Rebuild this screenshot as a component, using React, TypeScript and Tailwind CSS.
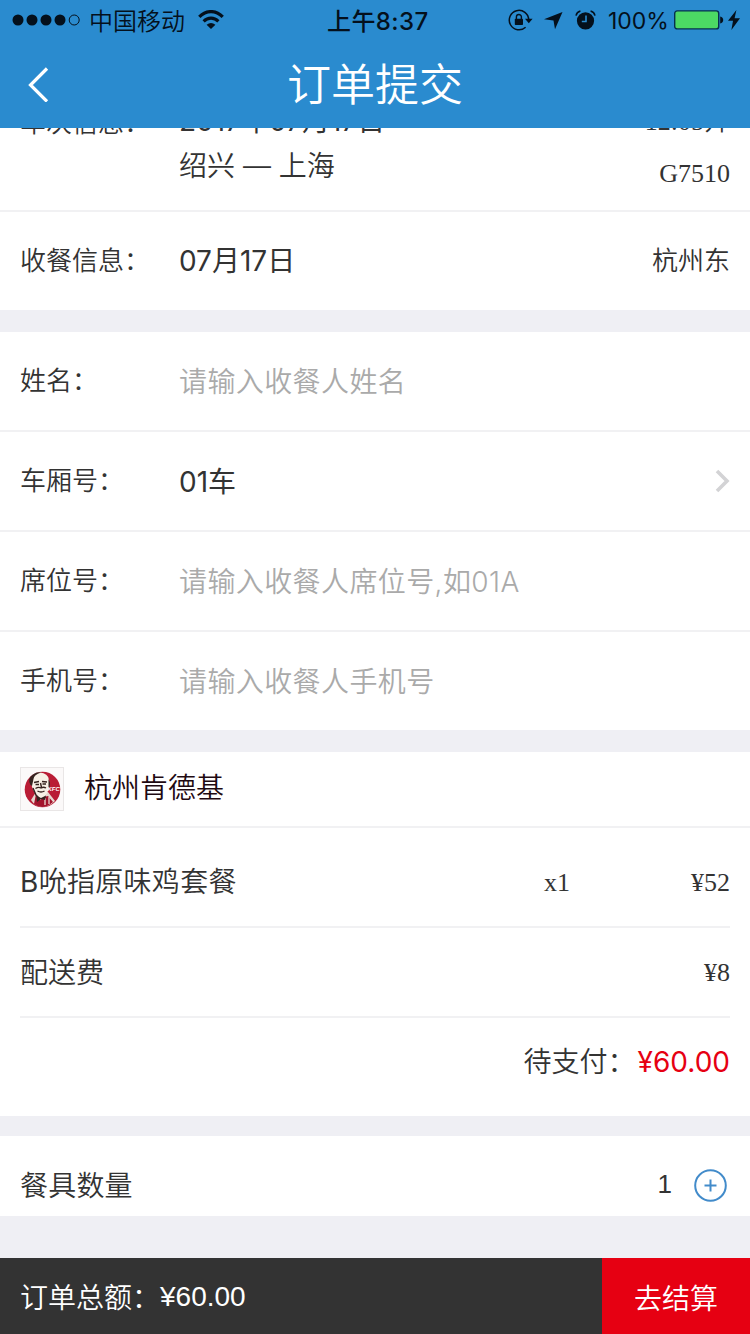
import type { ReactNode } from 'react';
import clsx from 'clsx';

interface FormRowProps {
  label: string;
  value?: string;
  placeholder?: string;
  arrow?: boolean;
  last?: boolean;
}

function StatusBar() {
  return (
    <div className="flex h-10 items-center pl-3 text-[24px] leading-10 text-[#04101c]">
      <svg width="69" height="12" viewBox="0 0 69 12" fill="currentColor">
        <circle cx="6" cy="6" r="5.5" />
        <circle cx="20" cy="6" r="5.5" />
        <circle cx="34" cy="6" r="5.5" />
        <circle cx="48" cy="6" r="5.5" />
        <circle cx="62.2" cy="6" r="5" fill="none" stroke="currentColor" strokeWidth="1" />
      </svg>
      <span className="mt-1 ml-2">中国移动</span>
      <svg className="ml-[13px]" width="26" height="20" viewBox="0 0 26 20" fill="none" stroke="currentColor">
        <path d="M1.3 6.8C8-.2 18-.2 24.7 6.8" strokeWidth="3.2" />
        <path d="M5.6 11.3C10 7 16 7 20.4 11.3" strokeWidth="3.1" />
        <path d="M13 19 8.6 14.7Q13 11.2 17.4 14.7Z" fill="currentColor" stroke="none" />
      </svg>
      <span className="mt-[3px] ml-[103px] w-[102px] font-medium tracking-[0.4px] whitespace-nowrap">上午8:37</span>
      <svg className="ml-[79px]" width="25" height="22" viewBox="0 0 25 22" fill="none" stroke="currentColor">
        <path d="M17.6 18.2A9.7 9.7 0 1 1 20.7 11" strokeWidth="1.5" />
        <path d="M17 9.8h7.6l-3.8 4.4z" fill="currentColor" stroke="none" />
        <rect x="6.8" y="9.7" width="8.2" height="6.3" rx=".8" fill="currentColor" stroke="none" />
        <path d="M8.4 10V8a2.5 2.5 0 0 1 5 0v2" strokeWidth="1.4" />
      </svg>
      <svg className="ml-[11px]" width="19" height="19" viewBox="0 0 19 19" fill="currentColor">
        <path d="M18.5 1 11 18.3 9.5 9.6 0 8.3z" />
      </svg>
      <svg className="ml-3" width="21" height="20" viewBox="0 0 21 20" fill="currentColor">
        <circle cx="10.5" cy="10.8" r="8.6" />
        <path d="M1 5.6Q1.8 2 5.4 1M20 5.6Q19.2 2 15.6 1" fill="none" stroke="currentColor" strokeWidth="1.5" />
        <path d="M11 5.5v6H6.8" fill="none" stroke="#2a8bcf" strokeWidth="1.6" />
      </svg>
      <span className="mt-0.5 ml-[12px] w-[62px] font-[Inter] text-[23px] font-normal whitespace-nowrap">100%</span>
      <svg className="ml-[4px]" width="50" height="20" viewBox="0 0 50 20">
        <rect x=".7" y=".9" width="44" height="18" rx="2.5" fill="#4cd964" stroke="#07304e" strokeWidth="1.4" />
        <path d="M46.2 6.5q3 .6 3 3.5t-3 3.5z" fill="#04101c" />
      </svg>
      <svg className="ml-[4px]" width="12" height="20" viewBox="0 0 12 20" fill="currentColor">
        <path d="M8.4 0 0 10.8h5L3.4 20 12 8.3H6.6z" />
      </svg>
    </div>
  );
}

function Header() {
  return (
    <header className="h-32 bg-[#2a8bcf]">
      <StatusBar />
      <div className="flex h-[88px] items-center justify-between px-7 text-white">
        <svg width="22" height="36" viewBox="0 0 22 36" fill="none" stroke="currentColor" strokeWidth="3.2">
          <path d="M19 2.5 2.5 19 19 35.5" />
        </svg>
        <h1 className="pt-0.5 text-[44px] leading-[86px]">订单提交</h1>
        <span className="w-[22px]" />
      </div>
    </header>
  );
}

function Label({ children }: { children: ReactNode }) {
  return <span className="w-[159px] shrink-0 pb-0.5 text-[26px]">{children}</span>;
}

function FormRow({ label, value, placeholder, arrow, last }: FormRowProps) {
  return (
    <div className={clsx('flex items-center px-5', last ? 'h-[98px]' : 'h-[100px] border-b-2 border-[#f1f1f3]')}>
      <Label>{label}</Label>
      <span className={clsx('grow pt-0.5 text-[28px]', value ? 'font-normal' : 'tracking-[0.4px] text-[#aaa]')}>
        {value || placeholder}
      </span>
      {arrow && (
        <svg width="16" height="24" viewBox="0 0 16 24" fill="none" stroke="#d3d3d5" strokeWidth="3.6">
          <path d="M3 2 13 12 3 22" />
        </svg>
      )}
    </div>
  );
}

function StoreLogo() {
  return (
    <svg width="44" height="44" viewBox="0 0 44 44">
      <rect x=".5" y=".5" width="43" height="43" fill="#fbf9f9" stroke="#e9e6e6" />
      <circle cx="22.5" cy="22.5" r="17.8" fill="#b91c35" />
      <path d="M11 33 16 25 28 25 35 34Q29 40 22 39.8T11 33Z" fill="#e6d8d0" />
      <path d="M14 37 16 27l3 2 1 4 4-3 4-1 5 6Q23 44 14 37Z" fill="#a3142d" />
      <path d="M25 31v7M29 30v7" stroke="#e6d8d0" strokeWidth="1.3" />
      <path d="M11 13Q12 5 20 5.5T29 13q1 8-2 13-3 6-6 6t-6-6q-4-6-4-13Z" fill="#f7f0e6" />
      <path d="M10.5 18Q7 11 13 7.5q4-3 8-2-7 2-7.5 6.5l-1.5 7zM28.5 12q3 5 0 10z" fill="#35231f" />
      <path d="M14 15.5l5-1M22 14.5l5 .5M15.5 17.5h3.5M22.5 17h3.5M20.5 16l1 4.5M15.5 21.5q3-2 5.5-.5 2.5-1.500 5 0M17.5 24q3.500 2 7 0M13 21l3 7 4 4" fill="none" stroke="#35231f" strokeWidth="1.4" />
      <path d="m16.5 29 4.5 2 5-2.5-1 4.5-4-1-4 3z" fill="#35231f" />
      <text x="27.5" y="23.5" fill="#fff" fontSize="6" fontWeight="700" fontStyle="italic" fontFamily="Liberation Sans, sans-serif">KFC</text>
    </svg>
  );
}

export default function App() {
  return (
    <div className="h-[1334px] w-[750px] overflow-hidden bg-[#efeff4] font-[Inter,'Noto_Sans_CJK_SC',sans-serif] font-[350] text-[#333]">
      <Header />

      <section className="bg-white">
        {/* train info, scrolled partly under the header */}
        <div className="flex h-[84px] items-end overflow-hidden border-b-2 border-[#f1f1f3] px-5">
          <div className="h-[112px] w-[159px] shrink-0 text-[26px] leading-[50px]">车次信息：</div>
          <div className="grow pb-[21px] text-[28px] leading-[45px]">
            <p className="font-normal">2017年07月17日</p>
            <p>绍兴 — 上海</p>
          </div>
          <div className="pb-[10px] text-right font-['Liberation_Serif','Noto_Sans_CJK_SC',serif] text-[26px] leading-[52px]">
            <p>12:05开</p>
            <p>G7510</p>
          </div>
        </div>
        <div className="flex h-[98px] items-center px-5">
          <Label>收餐信息：</Label>
          <span className="grow text-[28px] font-normal">07月17日</span>
          <span className="pb-0.5 text-[26px]">杭州东</span>
        </div>
      </section>

      <section className="mt-[22px] bg-white">
        <FormRow label="姓名：" placeholder="请输入收餐人姓名" />
        <FormRow label="车厢号：" value="01车" arrow />
        <FormRow label="席位号：" placeholder="请输入收餐人席位号,如01A" />
        <FormRow label="手机号：" placeholder="请输入收餐人手机号" last />
      </section>

      <section className="mt-[22px] bg-white">
        <div className="flex h-[76px] items-center border-b-2 border-[#f1f1f3] px-5">
          <StoreLogo />
          <span className="ml-5 pb-0.5 text-[28px] text-[#1f0a12]">杭州肯德基</span>
        </div>
        <div className="px-5 text-[28px]">
          <div className="flex h-[100px] items-center border-b-2 border-[#f1f1f3] pt-[10px]">
            <span className="grow tracking-[0.3px]"><span className="font-normal">B</span>吮指原味鸡套餐</span>
            <span className="w-[60px] font-['Liberation_Serif',serif] text-[26px]">x1</span>
            <span className="w-[126px] text-right font-['Liberation_Serif',serif] text-[26px]">¥52</span>
          </div>
          <div className="flex h-[90px] items-center justify-between border-b-2 border-[#f1f1f3]">
            <span className="pt-0.5">配送费</span>
            <span className="font-['Liberation_Serif',serif] text-[26px]">¥8</span>
          </div>
          <div className="flex h-[98px] items-center justify-end pb-[10px]">
            <span className="mr-0.5">待支付：</span>
            <span className="font-normal text-[#e60012]">¥60.00</span>
          </div>
        </div>
      </section>

      <section className="mt-[20px] flex h-[80px] items-center bg-white px-5 pt-[19px] text-[28px]">
        <span className="grow tracking-[0.2px]">餐具数量</span>
        <span className="pb-0.5 font-['Liberation_Sans',sans-serif] text-[26px]">1</span>
        <svg className="mr-[3px] ml-[22px]" width="33" height="33" viewBox="0 0 33 33" fill="none" stroke="#428bca" strokeWidth="2">
          <circle cx="16.5" cy="16.5" r="15.3" />
          <path d="M10.5 16.5h12M16.5 10.5v12" />
        </svg>
      </section>

      <footer className="mt-[42px] flex h-[76px] items-center bg-[#333] pl-5 text-[28px] text-white">
        <span className="pt-1">订单总额：</span>
        <span className="grow pt-0.5 font-['Liberation_Sans',sans-serif]">¥60.00</span>
        <button className="h-full w-[148px] bg-[#e60012] pt-1.5 font-[350]">去结算</button>
      </footer>
    </div>
  );
}
